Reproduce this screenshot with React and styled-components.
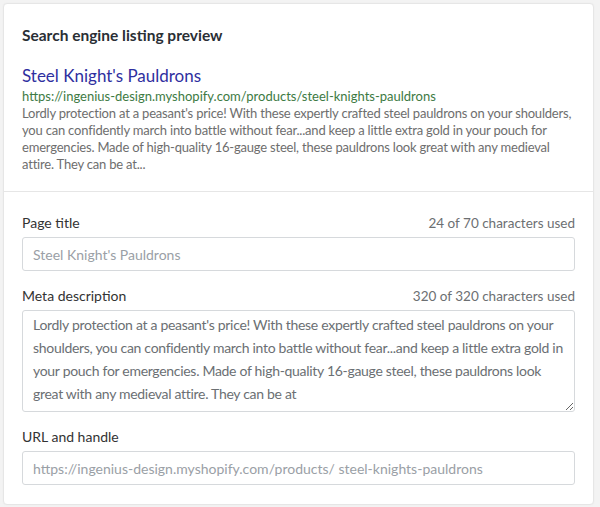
import React from 'react';
import styled, { createGlobalStyle } from 'styled-components';

const GlobalStyle = createGlobalStyle`
  html, body {
    margin: 0;
    padding: 0;
    background: #f3f3f3;
  }
  body {
    font-family: Lato, "Open Sans", sans-serif;
  }
`;

const Page = styled.div`
  padding: 3px 6px 4px 3px;
`;

const Card = styled.div`
  background: #fff;
  border: 1px solid #e6e6e6;
  border-radius: 4px;
  box-shadow: 0 0 2px rgba(0, 0, 0, 0.04);
`;

const Section = styled.div`
  padding: ${(p) => p.pad};
  & + & {
    border-top: 1px solid #e6e6e6;
  }
`;

const Heading = styled.h2`
  margin: 0 0 19px;
  font-size: 15.5px;
  font-weight: 700;
  color: #2a2f35;
  line-height: 20px;
`;

const PreviewTitle = styled.div`
  font-size: 17px;
  line-height: 23px;
  color: #2f2fa0;
`;

const PreviewUrl = styled.div`
  font-size: 13px;
  line-height: 18px;
  color: #3d7a43;
`;

const PreviewText = styled.p`
  margin: 0;
  font-size: 13px;
  line-height: 17px;
  letter-spacing: -0.2px;
  color: #6e6e6e;
`;

const Field = styled.div`
  & + & {
    margin-top: 15px;
  }
`;

const LabelRow = styled.div`
  display: flex;
  justify-content: space-between;
  align-items: baseline;
  margin-bottom: 4px;
  line-height: 20px;
`;

const Label = styled.label`
  font-size: 14px;
  color: #333;
`;

const Count = styled.span`
  font-size: 13.5px;
  color: #6c6f72;
`;

const Input = styled.input`
  display: block;
  box-sizing: border-box;
  width: 100%;
  height: 34px;
  padding: 0 10px;
  border: 1px solid #d6d9dc;
  border-radius: 3px;
  font-family: inherit;
  font-size: 14px;
  color: #333;
  outline: none;
  &::placeholder {
    color: #9aa0a6;
  }
`;

const TextArea = styled.textarea`
  display: block;
  box-sizing: border-box;
  width: 100%;
  height: 102px;
  padding: 2px 10px;
  border: 1px solid #d6d9dc;
  border-radius: 3px;
  font-family: inherit;
  font-size: 14px;
  line-height: 23px;
  letter-spacing: -0.3px;
  color: #6b6f73;
  resize: vertical;
  outline: none;
  overflow: hidden;
`;

const description =
  "Lordly protection at a peasant's price! With these expertly crafted steel pauldrons on your shoulders, you can confidently march into battle without fear...and keep a little extra gold in your pouch for emergencies. Made of high-quality 16-gauge steel, these pauldrons look great with any medieval attire. They can be at";

const App = () => (
  <>
    <GlobalStyle />
    <Page>
      <Card>
        <Section pad="21px 18px 18px 18px">
          <Heading>Search engine listing preview</Heading>
          <PreviewTitle>Steel Knight's Pauldrons</PreviewTitle>
          <PreviewUrl>https://ingenius-design.myshopify.com/products/steel-knights-pauldrons</PreviewUrl>
          <PreviewText>{description}...</PreviewText>
        </Section>
        <Section pad="21px 18px 19px 18px">
          <Field>
            <LabelRow>
              <Label>Page title</Label>
              <Count>24 of 70 characters used</Count>
            </LabelRow>
            <Input placeholder="Steel Knight's Pauldrons" />
          </Field>
          <Field>
            <LabelRow>
              <Label>Meta description</Label>
              <Count>320 of 320 characters used</Count>
            </LabelRow>
            <TextArea defaultValue={description} />
          </Field>
          <Field>
            <LabelRow>
              <Label>URL and handle</Label>
            </LabelRow>
            <Input placeholder="https://ingenius-design.myshopify.com/products/ steel-knights-pauldrons" />
          </Field>
        </Section>
      </Card>
    </Page>
  </>
);

export default App;
